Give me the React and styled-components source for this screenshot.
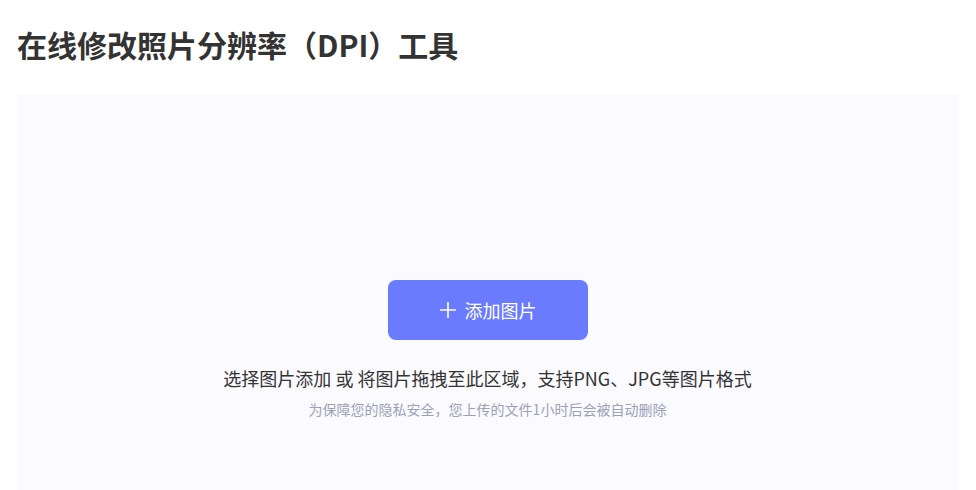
import styled, { createGlobalStyle } from "styled-components";

const GlobalStyle = createGlobalStyle`
    html, body {
        margin: 0;
        padding: 0;
        background: #ffffff;
        font-family: "Noto Sans CJK SC", "Noto Sans", sans-serif;
        overflow: hidden;
    }
`

const Page = styled.div`
    padding: 0 18px 0 17px;
`

const Title = styled.h1`
    margin: 24px 0 30px;
    font-size: 30px;
    line-height: 40px;
    font-weight: 700;
    color: #333333;
`

const DropZone = styled.div`
    height: 396px;
    background-color: #fafaff;
    display: flex;
    flex-direction: column;
    align-items: center;
    padding-top: 186px;
    box-sizing: border-box;
`

const AddButton = styled.button`
    width: 200px;
    height: 60px;
    border: none;
    border-radius: 8px;
    background-color: #6b7bff;
    color: #ffffff;
    font-family: inherit;
    font-size: 18px;
    display: flex;
    align-items: center;
    justify-content: center;
    gap: 8px;
    cursor: pointer;
`

const Hint = styled.p`
    margin: 25px 0 0;
    font-size: 18px;
    line-height: 26px;
    color: #333333;
`

const Note = styled.p`
    margin: 8px 0 0;
    font-size: 14px;
    line-height: 20px;
    color: #9ca1b6;
`

const PlusIcon = () => (
    <svg width="18" height="18" viewBox="0 0 18 18" fill="none">
        <path d="M9 1v16M1 9h16" stroke="#ffffff" strokeWidth="1.6" />
    </svg>
)

const App = () => {
    return (
        <Page>
            <GlobalStyle />
            <Title>在线修改照片分辨率（DPI）工具</Title>
            <DropZone>
                <AddButton>
                    <PlusIcon />
                    添加图片
                </AddButton>
                <Hint>选择图片添加 或 将图片拖拽至此区域，支持PNG、JPG等图片格式</Hint>
                <Note>为保障您的隐私安全，您上传的文件1小时后会被自动删除</Note>
            </DropZone>
        </Page>
    )
}
export default App;
